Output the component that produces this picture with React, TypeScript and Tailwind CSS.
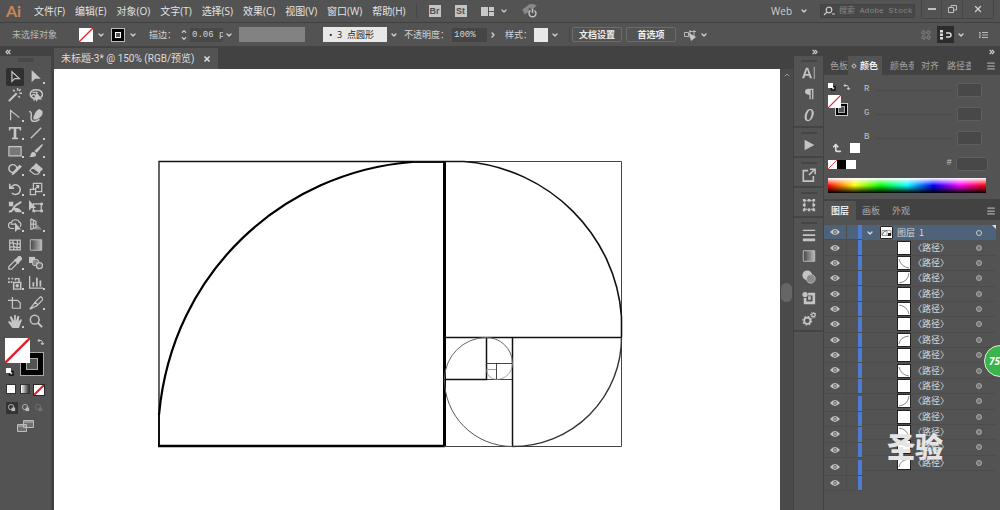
import React from 'react';
import clsx from 'clsx';
import {
  ChevronDown,
  ChevronRight,
  ChevronUp,
  ChevronsLeft,
  ChevronsRight,
  CornerLeftUp,
  Menu,
  X,
} from 'lucide-react';

const menus = [
  '文件(F)',
  '编辑(E)',
  '对象(O)',
  '文字(T)',
  '选择(S)',
  '效果(C)',
  '视图(V)',
  '窗口(W)',
  '帮助(H)',
];

const stroke = { fill: 'none', stroke: 'currentColor', strokeWidth: 1.4 };

// Tool glyphs, each drawn on a 16x16 grid
const glyphs: Record<string, React.ReactNode> = {
  select: <path d="M4.500 2v11l3.200-3.200H13z" {...stroke} />,
  direct: <path d="M3 0v14l4-4h6.500z" />,
  wand: (
    <g {...stroke}>
      <path d="m1 15 9-9" strokeWidth="2.400" />
      <path d="M11 0v3M13 6h3M6 2l1.500 2M12 9l1.500 2M14.500 1.500 12.500 3.500" strokeWidth="1.700" />
    </g>
  ),
  lasso: (
    <>
      <path d="M7 12C-1 11 0 2 8 2s9 7 5 9M5 14c4-1 3-9-1-6s3 5 6 3M4 5h6" {...stroke} strokeWidth="1.700" />
      <path d="M8 4v12l2.500-3H15z" />
    </>
  ),
  anchor: <path d="M3 14V3l10 8" {...stroke} />,
  pen: (
    <>
      <path d="M5 10c2-3 2-7 7-9l3 2c2 4-1 8-6 10H5z" />
      <path d="M0 4c5 0 1 7 3 10s6 1 9-1" {...stroke} strokeWidth="1.600" />
    </>
  ),
  type: <path d="M1 1h14v4h-1.500L13 3H9.500v10l2 .5V15h-7v-1.500l2-.5V3H3l-.5 2H1z" />,
  line: <path d="M2 14 14 2" {...stroke} strokeWidth="1.700" />,
  rect: <path d="M1 3h14v10.500H1z" fill="#777" stroke="currentColor" strokeWidth="1.300" />,
  brush: (
    <>
      <path d="m6 8 9-8 1 1-7 9z" />
      <path d="M0 15c3-1 1-6 5-6 3 0 4 4 2 5s-4 1-7 1z" />
    </>
  ),
  shaper: (
    <>
      <circle cx="5.500" cy="7.500" r="4.500" {...stroke} strokeWidth="1.700" />
      <path d="m5 12 8-9 3 2-9 9-3 1z" />
    </>
  ),
  eraser: (
    <>
      <path d="m8 1 8 7-4 4-8-6z" />
      <path d="m4 6 8 6-2 2H6L1 10z" {...stroke} />
    </>
  ),
  rotate: <path d="M2 2v5h5M3.500 6.500a5.500 5.500 0 1 1 1 6" {...stroke} strokeWidth="1.800" />,
  scale: <path d="M1.500 8.500h6v6h-6zM5 8V1.500h9.500V11H8M7 8l4-4M8 4h3v3" {...stroke} />,
  width: (
    <>
      <path d="M1 13c5 1 4-3 7-6s4-2 7-5" {...stroke} strokeWidth="2.200" />
      <path d="M1 2h5v5H1zM5 9l4 5h7c-1-4-5-6-11-5z" />
    </>
  ),
  transform: (
    <>
      <path d="M5 4.500h9v8H5z" {...stroke} />
      <path d="M0 0v12l3-3h5zM13 3h3v3h-3zM13 11h3v3h-3zM4 11h3v3H4z" />
    </>
  ),
  builder: (
    <>
      <path d="M7 12H4a3.500 3.500 0 0 1 0-7c1-4 8-4 9 0 2 0 2 3 1 5M3 7h6" {...stroke} />
      <path d="M8 5v11l3-3h4z" />
    </>
  ),
  perspective: (
    <>
      <path d="M2 1v12M2 1l6 3v7l-6 2M5 2v10M2 7h6" {...stroke} />
      <path d="m9 7 6 6H7z" opacity=".5" />
    </>
  ),
  mesh: (
    <path
      d="M2 2.500h12v11H2zM2 6c4-2 8 3 12 0M2 11c4-3 8 2 12-1M6 2c-2 4 3 7 0 12M10 2c3 4-2 7 1 12"
      {...stroke}
    />
  ),
  gradient: <path d="M1.500 2h13v12h-13z" fill="url(#grad)" stroke="currentColor" />,
  dropper: (
    <>
      <path d="M1 15v-3l7-7 3 3-7 7z" {...stroke} />
      <path d="m7 4 2-1 3-3c2-1 5 2 4 4l-3 3-1 2z" />
    </>
  ),
  blend: (
    <>
      <path d="M0 1h7v7H0z" />
      <rect x="4" y="4" width="7" height="7" rx="2" fill="#888" stroke="currentColor" />
      <circle cx="12" cy="11" r="3.500" fill="#666" stroke="currentColor" strokeWidth="1.400" />
    </>
  ),
  spray: (
    <>
      <path d="M6.500 7.500h8V15h-8zM8.500 5V3h4v4" {...stroke} strokeWidth="1.700" />
      <circle cx="10.500" cy="11" r="2" />
      <path d="M0 2h2v2H0zM4 2h2v2H4zM0 6h2v2H0zM3 6h2v2H3z" />
    </>
  ),
  graph: <path d="M0 0h1.500v13H16v1.500H0zM4 7h2v5H4zM8 2h2v10H8zM12 5h2v7h-2z" />,
  artboard: <path d="M0 5h11l3 3v6H5M5 1v13" {...stroke} />,
  slice: <path d="m1 15 6-8 6-6c2 0 3 2 2 4l-6 6zM7 7l3 3" {...stroke} />,
  hand: (
    <path d="M5 16 0 9l1.500-1 3 2L2 3l2-.5L7 8V1h2v7l2-6 2 .5L12 9l2-3 2 .5L12.500 16z" />
  ),
  zoom: (
    <>
      <circle cx="6.500" cy="6.500" r="5" {...stroke} strokeWidth="1.700" />
      <path d="m10 10 5 5" {...stroke} strokeWidth="2.200" />
    </>
  ),
  character: (
    <>
      <path d="M0 14 4.500 2h2.500l4.500 12H9l-1-3H3.500l-1 3zM4 9h3.500L5.800 4z" fillRule="evenodd" />
      <path d="M14 1v14" {...stroke} strokeWidth="1" />
    </>
  ),
  paragraph: <path d="M13 2v12h-1.500V3.500H10V14H8.500V9C2 9 2 2 7 2z" />,
  opentype: (
    <path
      d="M9.500 1C5 1 3 7 3 10.500 3 13.500 4.500 15 7 15c4 0 6.500-6 6.500-9.500C13.500 3 12 1 9.500 1zm0 1.200c3.500.8.500 11.600-2.500 11.600-3.500-.8-.5-11.600 2.500-11.600z"
      fillRule="evenodd"
    />
  ),
  play: <path d="M3 2v12l11-6z" />,
  share: <path d="M7 3H1.500v12H13V9M9 1.500h6V7M14 2 8 8" {...stroke} strokeWidth="1.800" />,
  grid: (
    <>
      <path d="M3 3h10v10H3z" {...stroke} strokeDasharray="2 1" />
      <path d="M1 1h3v3H1zM6.500 1h3v3h-3zM12 1h3v3h-3zM1 12h3v3H1zM6.500 12h3v3h-3zM12 12h3v3h-3zM1 6.500h3v3H1zM12 6.500h3v3h-3z" />
    </>
  ),
  lines: <path d="M1 2h14v1.500H1zM1 7h14v2H1zM1 12h14v3H1z" />,
  circles: (
    <>
      <circle cx="6" cy="6" r="5.500" />
      <circle cx="10" cy="10" r="5" fill="#8b8b8b" stroke="currentColor" />
    </>
  ),
  appearance: (
    <>
      <path d="M7 2h8v13H2V8h3v4h7V5H7z" />
      <circle cx="3.500" cy="4" r="3" />
      <path d="M7 6h3v4H7z" />
    </>
  ),
  gears: (
    <>
      <circle cx="6" cy="10" r="3.500" {...stroke} strokeWidth="2" />
      <circle cx="6" cy="10" r="5" {...stroke} strokeDasharray="1.900 2" />
      <circle cx="13" cy="3.500" r="2" {...stroke} />
      <circle cx="13" cy="3.500" r="3" {...stroke} strokeDasharray="1 1.300" />
    </>
  ),
};

function Glyph({ name }: { name: string }) {
  return (
    <svg viewBox="0 0 16 16" fill="currentColor" className="h-3.5 w-3.5">
      {glyphs[name]}
    </svg>
  );
}

// Groups of tools, two per row
const toolGroups = [
  ['select', 'direct', 'wand', 'lasso'],
  ['anchor', 'pen', 'type', 'line', 'rect', 'brush', 'shaper', 'eraser'],
  ['rotate', 'scale', 'width', 'transform', 'builder', 'perspective'],
  ['mesh', 'gradient', 'dropper', 'blend'],
  ['spray', 'graph'],
  ['artboard', 'slice', 'hand', 'zoom'],
];
const plainTools = ['select', 'wand', 'lasso', 'pen', 'transform', 'mesh', 'gradient', 'blend', 'artboard', 'zoom'];

const dockGroups = [
  ['character', 'paragraph', 'opentype'],
  ['play'],
  ['share'],
  ['grid'],
  ['lines', 'gradient', 'circles', 'appearance', 'gears'],
];

// Arc shown in each path's thumbnail
const paths = [
  '',
  'M0 1Q2 9 10 10',
  'M10 0Q9 9 0 10',
  '',
  'M0 1Q8 2 10 10',
  '',
  'M0 9Q1 2 10 1',
  '',
  'M0 1Q2 9 10 10',
  '',
  'M10 0Q9 9 0 10',
  '',
  'M0 1Q8 2 10 10',
  '',
  'M0 9Q1 2 10 1',
];

function NoneSwatch({ className, bold }: { className?: string; bold?: boolean }) {
  return (
    <svg viewBox="0 0 14 14" className={clsx('bg-white', className)}>
      <path d="M0 14 14 0" stroke="#e0202c" strokeWidth={bold ? 3 : 1.3} />
    </svg>
  );
}

function SwapIcon({ className }: { className?: string }) {
  return (
    <svg viewBox="0 0 8 8" className={clsx('h-2 w-2', className)}>
      <path d="M1 2.500h3Q5.500 2.500 5.500 6M2.500 1 1 2.500 2.500 4M4 5l1.500 2L7 5" fill="none" stroke="#c8c8c8" />
    </svg>
  );
}

function DefaultIcon({ className }: { className?: string }) {
  return (
    <svg viewBox="0 0 8 8" className={clsx('h-2 w-2', className)}>
      <path d="M3.500 3.500h3.500v3.500H3.500z" stroke="#111" strokeWidth="1.500" fill="#ccc" />
      <path d="M0 0h5v5H0z" fill="#fff" />
    </svg>
  );
}

function Eye() {
  return (
    <button aria-label="切换可见性" className="flex items-center justify-center">
      <svg viewBox="0 0 10 8" className="h-2 w-2.5">
        <path d="M0 4Q5-2 10 4 5 10 0 4z" fill="#c4c4c4" />
        <circle cx="5" cy="4" r="1.900" fill="#666" />
        <circle cx="5" cy="4" r=".8" fill="#ddd" />
      </svg>
    </button>
  );
}

function MenuBar() {
  return (
    <header className="flex h-[23px] items-center border-b border-[#404040] pl-1.5">
      <span className="w-7 font-[Lato] text-base leading-none font-bold text-[#c9865c]">Ai</span>
      <nav className="flex gap-2.5 text-[10px] whitespace-nowrap text-[#e4e4e4]">
        {menus.map((m) => (
          <button key={m}>{m}</button>
        ))}
      </nav>
      <div className="ml-2.5 flex items-center gap-3.5 border-l border-[#474747] pl-3 text-[#c8c8c8]">
        <button className="h-3 w-3 bg-[#c4c4c4] font-['Liberation_Sans',sans-serif] text-[9px] leading-3 font-bold text-[#505050]">
          Br
        </button>
        <button className="h-3 w-3 bg-[#c4c4c4] font-['Liberation_Sans',sans-serif] text-[9px] leading-3 font-bold text-[#505050]">
          St
        </button>
        <button aria-label="排列文档" className="flex items-center gap-1.5">
          <svg viewBox="0 0 13 9" className="h-[9px] w-[13px]" fill="currentColor">
            <path d="M0 0h7v9H0zM8 0h5v4H8zM8 5h5v4H8z" />
          </svg>
          <ChevronDown className="h-2 w-2" strokeWidth={4} />
        </button>
        <button aria-label="GPU 性能">
          <svg viewBox="0 0 16 14" className="h-3.5 w-4" fill="none" stroke="#c0c0c0" strokeWidth="1.500">
            <path d="M1 7 9 1M2 9l5-3M9 1l3 1-3 3" stroke="#888" strokeWidth="3" />
            <path d="M8.500 6.500a3.500 3.500 0 1 0 4 0M10.500 5v4" />
          </svg>
        </button>
      </div>
      <div className="ml-auto flex items-center self-stretch text-[10px] text-[#d0d0d0]">
        <button className="flex items-center gap-2">
          Web
          <ChevronDown className="h-2 w-2" strokeWidth={4} />
        </button>
        <label className="ml-3 flex h-3.5 items-center gap-1 border border-[#434343] bg-[#484848] pl-0.5">
          <svg viewBox="0 0 12 10" className="h-2.5 w-3" fill="none" stroke="#c8c8c8" strokeWidth="1.200">
            <circle cx="6" cy="4" r="2.800" />
            <path d="M4 6 1 9M9 8h3" />
          </svg>
          <input
            aria-label="搜索 Adobe Stock"
            placeholder="搜索 Adobe Stock"
            className="w-[75px] bg-transparent font-['Liberation_Mono','Noto_Sans_CJK_SC',monospace] text-[8px] outline-none placeholder:text-[#858585]"
          />
        </label>
        <div className="ml-1.5 flex h-[19px] self-start border border-t-0 border-[#464646]">
          <button aria-label="最小化" className="flex w-[19px] items-center justify-center">
            <span className="h-0.5 w-2 bg-[#c0c0c0]" />
          </button>
          <button aria-label="还原" className="flex w-[22px] items-center justify-center border-x border-[#464646]">
            <svg viewBox="0 0 9 8" className="h-2 w-[9px]" fill="none" stroke="#c0c0c0">
              <path d="M.5 2.500h5v5h-5zM3 2V.5h5.500V5H6" />
            </svg>
          </button>
          <button aria-label="关闭" className="flex w-[30px] items-center justify-center">
            <X className="h-2.5 w-2.5" strokeWidth={3} />
          </button>
        </div>
        <div className="w-1.5" />
      </div>
    </header>
  );
}

function ControlBar() {
  const arrow = <ChevronDown className="h-2 w-2" strokeWidth={4} />;
  return (
    <div className="flex h-6 items-center border-b border-[#444] pl-3 text-[9px] whitespace-nowrap text-[#d4d4d4]">
      <span className="w-[67px] text-[#b8b8b8]">未选择对象</span>
      <button aria-label="填色" className="flex items-center gap-1">
        <NoneSwatch className="h-3.5 w-3.5" />
        {arrow}
      </button>
      <button aria-label="描边颜色" className="ml-1.5 flex items-center gap-1">
        <span className="flex h-3.5 w-3.5 items-center justify-center border border-[#bbb] bg-black">
          <span className="h-1.5 w-1.5 border border-white bg-[#555]" />
        </span>
        {arrow}
      </button>
      <label htmlFor="weight" className="ml-3 w-7">
        描边：
      </label>
      <span className="ml-[3px] flex flex-col">
        <ChevronUp className="h-[7px] w-2" strokeWidth={4} />
        <ChevronDown className="h-[7px] w-2" strokeWidth={4} />
      </span>
      <input
        id="weight"
        defaultValue="0.06 pt"
        className="ml-0.5 h-3.5 w-[33px] bg-[#484848] pl-0.5 font-['Liberation_Mono',monospace] text-[9px]"
      />
      <button aria-label="粗细选项" className="px-0.5">
        {arrow}
      </button>
      <div className="ml-1 h-[15px] w-[66px] bg-[#828282]" />
      <button aria-label="画笔" className="ml-[18px] flex items-center gap-[3px]">
        <span className="h-[15px] w-16 bg-[#e8e8e8] pl-1.5 text-left leading-[15px] text-[#222]">
          •&nbsp; 3 &nbsp;点圆形
        </span>
        {arrow}
      </button>
      <label htmlFor="opacity" className="ml-1.5 w-12">
        不透明度：
      </label>
      <input
        id="opacity"
        defaultValue="100%"
        className="h-3.5 w-[35px] bg-[#454545] pl-0.5 font-['Liberation_Mono',monospace] text-[9px]"
      />
      <button aria-label="不透明度选项" className="ml-0.5">
        <ChevronRight className="h-2 w-2" strokeWidth={4} />
      </button>
      <span className="ml-2 w-[29px]">样式：</span>
      <button aria-label="样式" className="flex items-center gap-[3px]">
        <span className="h-3.5 w-3.5 bg-[#e8e8e8]" />
        {arrow}
      </button>
      <div className="ml-2.5 flex gap-1 border-l border-[#474747] pl-0.5">
        <button className="h-[15px] w-[50px] rounded-xs border border-[#6c6c6c] font-bold text-[#eee]">文档设置</button>
        <button className="h-[15px] w-[50px] rounded-xs border border-[#6c6c6c] font-bold text-[#eee]">首选项</button>
      </div>
      <button aria-label="选择类似对象" className="ml-2 flex items-center gap-1">
        <svg viewBox="0 0 12 12" className="h-3 w-3" fill="none" stroke="#b8b8b8">
          <path d="M.5 3.500h4v4h-4zM6 1v8M10 1v7M5 2.500h7" />
          <path d="m5 4 7 4-5 4z" fill="#c8c8c8" stroke="none" />
        </svg>
        {arrow}
      </button>
      <div className="ml-auto flex items-center pr-3">
        <svg viewBox="0 0 10 10" className="h-2.5 w-2.5" fill="none" stroke="#787878" strokeWidth="1.500">
          <path d="M1 1h3v3H1zM6 1h3v3H6zM1 6h3v3H1zM6 6h3v3H6z" strokeDasharray="2 1" />
        </svg>
        <button aria-label="对齐" className="ml-1.5 flex h-[17px] w-[17px] items-center justify-center bg-[#2c2c2c]">
          <svg viewBox="0 0 12 10" className="h-2.5 w-3" fill="none" stroke="#ddd" strokeWidth="1.500">
            <path d="M1.500 0v10" strokeWidth="3" strokeDasharray="2.500 1" />
            <path d="M6 3h3q2 0 2 2T9 7H6" />
          </svg>
        </button>
        <span className="ml-[3px]">{arrow}</span>
        <svg viewBox="0 0 9 8" className="ml-3.5 h-2 w-[9px]" stroke="#bbb">
          <path d="M3 1.500h6M3 4h6M3 6.500h6M0 1.500h1.500M0 6.500h1.500M1 2v4" />
        </svg>
      </div>
    </div>
  );
}

function Toolbox() {
  return (
    <aside className="w-[52px] shrink-0 border-r border-[#444] px-1.5">
      <div className="-mx-1.5 flex h-[9px] items-center bg-[#424242] pl-1">
        <ChevronsLeft className="h-2 w-2 text-[#c8c8c8]" strokeWidth={4} />
      </div>
      <div className="mx-auto my-0.5 h-1 w-4 bg-[#484848]" />
      <div className="flex flex-col gap-0.5 pt-1">
        {toolGroups.map((tools) => (
          <div key={tools[0]} className="grid grid-cols-2 gap-x-1">
            {tools.map((tool) => (
              <button
                key={tool}
                aria-label={tool}
                className={clsx(
                  'relative flex h-[18px] items-center justify-center text-[#c6c6c6]',
                  tool === 'select' && 'rounded-xs bg-[#303030]'
                )}
              >
                <Glyph name={tool} />
                {!plainTools.includes(tool) && (
                  <span className="absolute right-0 bottom-0.5 h-0.5 w-0.5 bg-[#ccc]" />
                )}
              </button>
            ))}
          </div>
        ))}
      </div>
      <div className="relative mt-2 h-10">
        <span className="absolute top-3.5 left-3.5 flex h-6 w-6 items-center justify-center border border-[#aaa] bg-black">
          <span className="h-3 w-3 border border-[#aaa] bg-[#535353]" />
        </span>
        <NoneSwatch className="absolute top-0 -left-px h-[25px] w-[25px]" />
        <SwapIcon className="absolute top-0 right-0" />
        <DefaultIcon className="absolute bottom-0.5 left-0" />
      </div>
      <div className="mt-1.5 flex justify-between">
        <button aria-label="颜色" className="h-2.5 w-2.5 border border-[#333] bg-white" />
        <button aria-label="渐变" className="h-2.5 w-2.5 border border-[#333] bg-linear-to-r from-white to-[#333]" />
        <button aria-label="无" className="bg-[#292929] p-px">
          <NoneSwatch bold className="block h-2.5 w-2.5" />
        </button>
      </div>
      <div className="mt-1.5 flex justify-between text-[#bbb]">
        {[0, 1, 2].map((mode) => (
          <button
            key={mode}
            aria-label="绘图模式"
            className={clsx('p-0.5', mode === 0 && 'bg-[#333]', mode === 2 && 'opacity-30')}
          >
            <svg viewBox="0 0 9 9" className="h-2 w-2">
              <circle cx="3.500" cy="3.500" r="3" fill="none" stroke="currentColor" />
              <path d="M4 4h4v4H4z" fill="currentColor" />
            </svg>
          </button>
        ))}
      </div>
      <button aria-label="更改屏幕模式" className="mx-auto mt-1.5 block">
        <svg viewBox="0 0 17 12" className="h-3 w-[17px]" fill="#707070" stroke="#bbb">
          <path d="M6.500.5h10v7h-10zM.5 4.500h9v7h-9z" />
          <path d="M7 2h9M1 6h8" />
        </svg>
      </button>
    </aside>
  );
}

function Canvas() {
  return (
    <main className="flex min-w-0 flex-1 flex-col bg-[#424242]">
      <div className="flex h-[22px] shrink-0 pl-0.5">
        <div className="mt-px flex items-center gap-2 bg-[#535353] px-[7px] font-[Roboto,'Noto_Sans_CJK_SC',sans-serif] text-[10px] whitespace-nowrap text-[#dcdcdc]">
          未标题-3* @ 150% (RGB/预览)
          <button aria-label="关闭文档">
            <X className="h-2 w-2" strokeWidth={5} />
          </button>
        </div>
      </div>
      <div className="flex flex-1">
        <div className="ml-0.5 min-w-0 flex-1 overflow-hidden bg-white">
          <svg width="726" height="441" viewBox="54 69 726 441" fill="none" stroke="#111">
            <path d="M159 446V161.500H444" strokeWidth="1.300" />
            <path d="M412 162H444M159 415V446" strokeWidth="2" />
            <path d="M159 415C172 270 285 172 412 162" stroke="#000" strokeWidth="2.200" />
            <path d="M158 446H445" stroke="#000" strokeWidth="2.500" />
            <path d="M444.500 161V447" stroke="#000" strokeWidth="3" />
            <path d="M444 161.500H621.500V446.500H444" stroke="#444" />
            <path d="M444 161.500H464C550 168 616 236 621.500 317V337" strokeWidth="1.600" />
            <path d="M444 337.500H622M512.500 337V446" strokeWidth="1.500" />
            <path d="M621.500 337A109 109 0 0 1 512.500 446.500" stroke="#333" strokeWidth="1.400" />
            <path d="M512 446.500A68 67 0 0 1 444.500 379" stroke="#555" />
            <path d="M444 379.500H486.500V338" strokeWidth="1.500" />
            <path d="M486 379.500H512" strokeWidth=".8" />
            <path d="M444.500 379A42 42 0 0 1 486 337.500A26 26 0 0 1 512.500 363" stroke="#666" />
            <path d="M486 363.500H512M496.500 363V379" stroke="#333" strokeWidth=".9" />
            <path d="M512.500 363A16 16 0 0 1 496.500 379.500A10 10 0 0 1 486.500 369.500H496" stroke="#888" strokeWidth=".8" />
          </svg>
        </div>
        <div className="flex w-[13px] flex-col items-center bg-[#4a4a4a] pt-0.5">
          <ChevronUp className="h-2 w-2 text-[#999]" strokeWidth={3} />
          <div className="mt-[204px] h-[19px] w-[11px] rounded-md bg-[#666]" />
        </div>
      </div>
    </main>
  );
}

function IconDock() {
  return (
    <aside className="w-[31px] shrink-0 border-x border-[#424242]">
      <div className="flex h-[9px] items-center justify-end bg-[#424242] pr-1">
        <ChevronsRight className="h-2 w-2 text-[#c8c8c8]" strokeWidth={4} />
      </div>
      {dockGroups.map((icons) => (
        <div key={icons[0]} className="border-b-2 border-[#444] pt-1 pb-px">
          <div className="mx-auto h-0.5 w-4 bg-[#454545]" />
          {icons.map((name) => (
            <button
              key={name}
              aria-label={name}
              className="flex h-[21px] w-full items-center justify-center text-[#c4c4c4]"
            >
              <Glyph name={name} />
            </button>
          ))}
        </div>
      ))}
    </aside>
  );
}

function ColorPanel() {
  return (
    <section>
      <div className="flex h-[19px] items-center bg-[#424242] text-[9px] whitespace-nowrap text-[#a4a4a4]">
        <button className="w-6 pl-1.5">色板</button>
        <button className="flex h-full items-center gap-1 bg-[#535353] px-1 font-bold text-[#eee]">
          <span className="h-1 w-1 rotate-45 border border-[#bbb]" />
          颜色
        </button>
        <button className="ml-2 w-6 overflow-hidden text-left">颜色参考</button>
        <button className="ml-[7px]">对齐</button>
        <button className="ml-2 w-6 overflow-hidden text-left">路径查找器</button>
        <Menu className="mr-1 ml-auto h-2.5 w-2.5" strokeWidth={3} />
      </div>
      <div className="flex h-[103px] pt-2 pr-3 pl-1">
        <div className="w-9">
          <div className="flex gap-[7px]">
            <DefaultIcon />
            <SwapIcon />
          </div>
          <div className="relative mt-1 h-[22px]">
            <span className="absolute top-2 left-[7px] flex h-[13px] w-[13px] items-center justify-center border border-[#ccc] bg-black">
              <span className="h-[7px] w-[7px] border border-[#aaa] bg-[#535353]" />
            </span>
            <NoneSwatch className="absolute top-0 left-0 h-[13px] w-[13px]" />
          </div>
          <div className="mt-[26px] flex items-center gap-2 pl-1">
            <CornerLeftUp className="h-2.5 w-2.5 text-[#ddd]" strokeWidth={4} />
            <span className="h-2.5 w-2.5 bg-white" />
          </div>
          <div className="mt-[7px] flex w-7">
            <NoneSwatch className="h-[9px] w-[9px]" />
            <span className="h-[9px] w-[9px] bg-black" />
            <span className="h-[9px] w-2.5 bg-white" />
          </div>
        </div>
        <div className="flex flex-1 flex-col gap-2.5 font-['Liberation_Mono',monospace] text-[9px] text-[#c4c4c4]">
          {['R', 'G', 'B'].map((channel) => (
            <label key={channel} className="flex h-3.5 items-center">
              <span className="w-3">{channel}</span>
              <span className="h-px flex-1 bg-[#4b4b4b]" />
              <input className="mr-1.5 ml-1 h-3.5 w-[25px] rounded-xs border border-[#5e5e5e] bg-[#484848]" />
            </label>
          ))}
          <label className="mt-0.5 flex items-center justify-end gap-1">
            #
            <input className="h-3.5 w-8 rounded-xs border border-[#5e5e5e] bg-[#484848]" />
          </label>
        </div>
      </div>
      <div className="mr-3.5 ml-1 h-[15px] bg-[linear-gradient(to_right,#f00,#ff0,#0f0,#0ff,#00f,#f0f,#f00)]">
        <div className="h-full bg-[linear-gradient(to_bottom,#fff,transparent_50%,#000)]" />
      </div>
      <div className="h-1.5" />
    </section>
  );
}

function EyeRows({ count, first }: { count: number; first?: boolean }) {
  return (
    <div className="grid auto-rows-fr" style={{ height: Math.round(count * 15.4) }}>
      {Array.from({ length: count }, (_, i) => (
        <div
          key={i}
          className={clsx(
            'grid grid-cols-[22px_12px_4px] border-b border-[#4c4c4c]',
            first && i === 0 && 'bg-[#4e6379]'
          )}
        >
          <Eye />
          <span className="border-l border-[#4c4c4c]" />
          <span className="bg-[#4c7ad4]" />
        </div>
      ))}
    </div>
  );
}

function LayersPanel() {
  return (
    <section className="border-t-2 border-[#424242]">
      <div className="flex h-[19px] items-center bg-[#424242] text-[9px] text-[#aaa]">
        <button className="h-full bg-[#535353] px-[7px] font-bold text-[#e8e8e8]">图层</button>
        <button className="ml-1.5">画板</button>
        <button className="ml-3">外观</button>
        <Menu className="mr-1 ml-auto h-2.5 w-2.5" strokeWidth={3} />
      </div>
      <div className="mt-[5px] flex">
        <div className="flex shrink-0 flex-col gap-0.5">
          <EyeRows count={11} first />
          <EyeRows count={4} />
          <EyeRows count={2} />
        </div>
        <div className="relative mr-1 h-[246px] flex-1">
          <ul className="grid h-full auto-rows-fr font-['Noto_Sans_CJK_SC',sans-serif] text-[9px] leading-3 text-[#d8d8d8]">
            <li className="relative flex items-center bg-[#4e6379]">
              <ChevronDown className="ml-1 h-2 w-2" strokeWidth={4} />
              <svg viewBox="0 0 13 13" className="ml-1.5 h-[13px] w-[13px] bg-white" fill="none" stroke="#222">
                <path d="M.5.5h12v12H.5z" />
                <path d="M2 9.500V4.500h9v5zM7 4.500v5" stroke="#888" strokeWidth=".8" />
                <path d="M2 9Q3 5 7 4.500" stroke="#555" strokeWidth=".8" />
                <path d="M8 7h3v3H8z" fill="#222" stroke="none" />
              </svg>
              <span className="ml-1 flex-1">图层&nbsp; 1</span>
              <span className="mr-3.5 h-1.5 w-1.5 rounded-full border border-[#ccc]" />
              <span className="absolute top-0 right-0 h-1 w-1 bg-[#ddd] [clip-path:polygon(0_0,100%_0,100%_100%)]" />
            </li>
            {paths.map((d, i) => (
              <li key={i} className="flex items-center border-b border-[#4c4c4c]">
                <svg
                  viewBox="-1 -1 12 12"
                  className="ml-[35px] h-[14px] w-[14px] border border-[#222] bg-white"
                  fill="none"
                >
                  <path d={d} stroke="#888" />
                </svg>
                <span className="flex-1 pl-0.5">〈路径〉</span>
                <span className="mr-3.5 h-1.5 w-1.5 rounded-full border border-[#aaa] bg-[#777]" />
              </li>
            ))}
          </ul>
          <span className="absolute bottom-2 left-[25px] text-[28px] leading-8 font-black text-[#e4e4e4]">圣验</span>
        </div>
      </div>
    </section>
  );
}

export default function App() {
  return (
    <div className="relative flex h-screen flex-col overflow-hidden bg-[#535353] font-['Open_Sans','Noto_Sans_CJK_SC',sans-serif]">
      <svg className="absolute h-0 w-0">
        <linearGradient id="grad">
          <stop stopColor="#444" />
          <stop offset="1" stopColor="#bbb" />
        </linearGradient>
      </svg>
      <MenuBar />
      <ControlBar />
      <div className="flex min-h-0 flex-1">
        <Toolbox />
        <Canvas />
        <IconDock />
        <aside className="w-44 shrink-0">
          <div className="flex h-[9px] items-center justify-end bg-[#424242] pr-1">
            <ChevronsRight className="h-2 w-2 text-[#c8c8c8]" strokeWidth={4} />
          </div>
          <ColorPanel />
          <LayersPanel />
        </aside>
      </div>
      <div className="absolute top-[345px] -right-4 h-8 w-8 rounded-full border border-[#e4e4e4] bg-[#39b54a] pl-1 text-[10px] leading-[30px] font-bold text-white italic">
        75
      </div>
    </div>
  );
}
